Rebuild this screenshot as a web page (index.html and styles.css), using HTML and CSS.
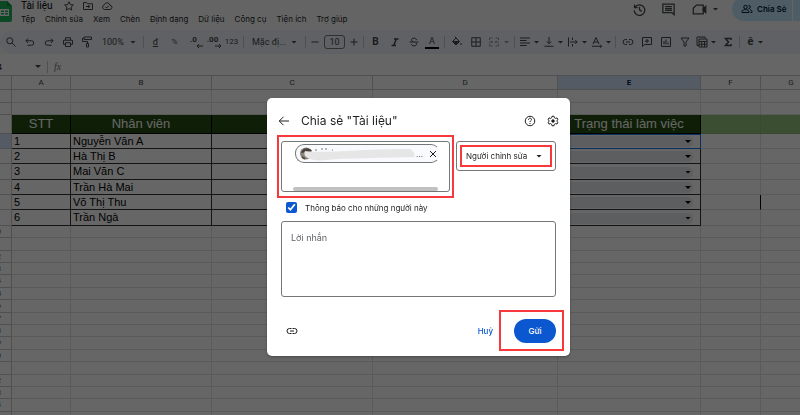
FILE: index.html
```html
<!DOCTYPE html>
<html lang="vi">
<head>
<meta charset="utf-8">
<title>Tài liệu</title>
<link rel="stylesheet" href="styles.css">
</head>
<body>
<div class="app">
  <header class="top">
    <svg class="logo" viewBox="0 0 12 24"><path d="M0 1h7l5 5v14a2 2 0 0 1-2 2H0z" fill="#22b55d"/><path d="M7 1l5 5H7z" fill="#148a45"/><path d="M0 9h9v7H0zM1 10.500v1.500h3v-1.500zM5 10.500v1.500h3v-1.500zM1 13v1.500h3V13zM5 13v1.500h3V13z" fill="#fff" fill-rule="evenodd"/></svg>
    <div class="names">
      <div class="title-line">
        <span class="doc-name">Tài liệu</span>
        <svg class="ic" viewBox="0 0 24 24"><path d="M12 3.500l2.600 5.800 6.200.600-4.700 4.200 1.400 6.200L12 17l-5.500 3.300 1.400-6.200-4.700-4.200 6.200-.600z"/></svg>
        <svg class="ic" viewBox="0 0 24 24"><path d="M3 5h6l2 2.500h10V19H3zM8 13h7M12.500 10l3 3-3 3"/></svg>
        <svg class="ic" viewBox="0 0 24 24"><path d="M7 19a5 5 0 0 1-.500-9.500A6 6 0 0 1 18 10.500a4.300 4.300 0 0 1 .500 8.500zM8.500 13.500l2.500 2.500 4.500-4.500"/></svg>
      </div>
      <nav class="menu"><a href="#">Tệp</a><a href="#">Chỉnh sửa</a><a href="#">Xem</a><a href="#">Chèn</a><a href="#">Định dạng</a><a href="#">Dữ liệu</a><a href="#">Công cụ</a><a href="#">Tiện ích</a><a href="#">Trợ giúp</a></nav>
    </div>
    <div class="actions">
      <button aria-label="Lịch sử"><svg class="ic big" viewBox="0 0 24 24"><path d="M4 4v5h5M4.500 9A8.500 8.500 0 1 1 3.500 13M12 7.500V12.500l3.500 2.500"/></svg></button>
      <button aria-label="Nhận xét"><svg class="ic big" viewBox="0 0 24 24"><path d="M3 3.500h18v17l-3.500-3.500H3zM6.500 7.500h11M6.500 10.500h11M6.500 13.500h11"/></svg></button>
      <button aria-label="Cuộc gọi"><svg class="ic big" viewBox="0 0 24 24"><path d="M7 5h11v14H2V10z"/><path d="M18 10.500l4-3.500v10l-4-3.500z" fill="#444746"/></svg><i class="caret"></i></button>
      <button class="share"><svg class="ic" viewBox="0 0 24 24"><circle cx="9" cy="8" r="3.500"/><path d="M2 19v-2c0-5 14-5 14 0v2zM15 4.500a3.500 3.500 0 0 1 0 7M18 13.500c3 .800 4 2 4 3.500v2h-3"/></svg><span>Chia Sẻ</span></button>
      <button class="share-more" aria-label="Tùy chọn chia sẻ"></button>
    </div>
  </header>

  <div class="toolbar">
    <button aria-label="Tìm"><svg class="ic" viewBox="0 0 24 24"><circle cx="9.500" cy="9.500" r="6"/><path d="M14 14l7 7"/></svg></button>
    <button aria-label="Hoàn tác"><svg class="ic" viewBox="0 0 24 24"><path d="M8 5L4 9.500 8 14M4 9.500h11a4.500 4.500 0 0 1 0 9H7"/></svg></button>
    <button aria-label="Làm lại"><svg class="ic" viewBox="0 0 24 24"><path d="M16 5l4 4.500-4 4.500M20 9.500H9a4.500 4.500 0 0 0 0 9h8"/></svg></button>
    <button aria-label="In"><svg class="ic" viewBox="0 0 24 24"><path d="M7 8V3.500h10V8M7 16.500H3V8.500h18v8h-4M7 13.500h10V21H7z"/></svg></button>
    <button aria-label="Sao chép định dạng"><svg class="ic" viewBox="0 0 24 24"><path d="M6 2h15v5H6zM6 4.500H3V11h10v4M11 15h4v7h-4z"/></svg></button>
    <button class="zoom"><span>100%</span><i class="caret"></i></button>
    <i class="sep"></i>
    <button><u>đ</u></button>
    <button class="small">%</button>
    <button class="dec">.0<svg viewBox="0 0 8 4"><path d="M8 2H2M4 0L2 2l2 2"/></svg></button>
    <button class="dec">.00<svg viewBox="0 0 8 4"><path d="M1 2h6M5 0l2 2-2 2"/></svg></button>
    <button class="small">123</button>
    <i class="sep"></i>
    <button class="font"><span>Mặc đị...</span><i class="caret"></i></button>
    <i class="sep"></i>
    <button class="step" aria-label="Giảm"><svg class="ic" viewBox="0 0 24 24"><path d="M5 12h14"/></svg></button>
    <input class="size" value="10" aria-label="Cỡ chữ">
    <button class="step" aria-label="Tăng"><svg class="ic" viewBox="0 0 24 24"><path d="M5 12h14M12 5v14"/></svg></button>
    <i class="sep"></i>
    <button class="bold">B</button>
    <button aria-label="Nghiêng"><svg class="ic heavy" viewBox="0 0 24 24"><path d="M10 6h9M5 19h9M14.500 6l-5 13"/></svg></button>
    <button aria-label="Gạch ngang"><svg class="ic" viewBox="0 0 24 24"><path d="M3 12h18M17 8c0-5-10-5-10-.500 0 2 1.500 3 3 3.500M7 16c0 5 10 5 10 .500 0-1.500-.500-2.500-1-3"/></svg></button>
    <button class="tint">A</button>
    <i class="sep"></i>
    <button aria-label="Màu nền"><svg class="ic" viewBox="0 0 24 24"><path d="M8 1l3 4M10 4l7 7-7 7-7-7z"/><path d="M4 11h12l-6 6z" fill="#444746"/><path d="M20 14v4"/></svg></button>
    <button aria-label="Đường viền"><svg class="ic" viewBox="0 0 24 24"><path d="M3.500 3.500h17v17h-17zM12 3.500v17M3.500 12h17"/></svg></button>
    <button class="merge" aria-label="Hợp nhất"><svg class="ic" viewBox="0 0 24 24"><path d="M9 4H3v4M15 4h6v4M9 20H3v-4M15 20h6v-4M2 12h7M7 9.500L9.500 12 7 14.500M22 12h-7M17 9.500L14.500 12l2.500 2.500"/></svg><i class="caret"></i></button>
    <i class="sep"></i>
    <button class="drop" aria-label="Căn ngang"><svg class="ic" viewBox="0 0 24 24"><path d="M2 4h20M2 9h13M2 14h20M2 19h13"/></svg><i class="caret"></i></button>
    <button class="drop" aria-label="Căn dọc"><svg class="ic" viewBox="0 0 24 24"><path d="M3 20.500h18M12 2v13M7.500 11l4.500 4.500 4.500-4.500"/></svg><i class="caret"></i></button>
    <button class="drop" aria-label="Xuống dòng"><svg class="ic" viewBox="0 0 24 24"><path d="M3 3v18M11 3v5M11 16v5M6 12h14M16.500 8l4 4-4 4"/></svg><i class="caret"></i></button>
    <button class="drop" aria-label="Xoay chữ"><svg class="ic" viewBox="0 0 24 24"><path d="M4 16l6-13 6 13M6 12h8M2 20.500h19M18.500 17.500l3 3-3 3"/></svg><i class="caret"></i></button>
    <i class="sep"></i>
    <button aria-label="Liên kết"><svg class="ic" viewBox="0 0 24 24"><path d="M10 7H7a5 5 0 0 0 0 10h3M14 7h3a5 5 0 0 1 0 10h-3M8 12h8"/></svg></button>
    <button aria-label="Thêm nhận xét"><svg class="ic" viewBox="0 0 24 24"><path d="M3 3h18v14H7l-4 4zM12 6v8M8 10h8"/></svg></button>
    <button aria-label="Biểu đồ"><svg class="ic" viewBox="0 0 24 24"><path d="M3 3h18v18H3zM8 10v7M12 7v10M16 13v4"/></svg></button>
    <button aria-label="Bộ lọc"><svg class="ic" viewBox="0 0 24 24"><path d="M4 4h16l-6 8v8h-4v-8z"/></svg></button>
    <button class="drop" aria-label="Bảng"><svg class="ic" viewBox="0 0 24 24"><path d="M6 19H2V2h16v3M6 6h16v16H6zM6 11h16M6 16.500h16M11.500 11v11M17 11v11"/></svg><i class="caret"></i></button>
    <button aria-label="Hàm"><svg class="ic heavy" viewBox="0 0 24 24"><path d="M18 8V5H7l6 7-6 7h11v-3"/></svg></button>
    <i class="sep"></i>
    <button class="merge input"><b>ê</b><i class="caret"></i></button>
  </div>

  <div class="formula">
    <span class="cell-name">4</span><i class="caret"></i><i class="sep"></i><em>fx</em>
  </div>

  <div class="sheet">
    <table>
      <colgroup><col class="c-row"><col class="c-a"><col class="c-b"><col class="c-c"><col class="c-d"><col class="c-e"><col class="c-f"><col class="c-g"></colgroup>
      <thead>
        <tr><th></th><th>A</th><th>B</th><th>C</th><th>D</th><th class="on">E</th><th>F</th><th>G</th></tr>
      </thead>
      <tbody class="lead">
        <tr><th></th><td></td><td></td><td></td><td></td><td></td><td></td><td></td></tr>
        <tr><th></th><td></td><td></td><td></td><td></td><td></td><td></td><td></td></tr>
        <tr class="heads"><th></th><td>STT</td><td>Nhân viên</td><td></td><td></td><td>Trạng thái làm việc</td><td></td><td></td></tr>
      </tbody>
      <tbody class="data">
        <tr><th class="on"></th><td>1</td><td>Nguyễn Văn A</td><td></td><td></td><td class="active"><label class="pick"><select aria-label="Trạng thái 1"><option></option></select><i class="caret"></i></label></td><td></td><td></td></tr>
        <tr><th></th><td>2</td><td>Hà Thị B</td><td></td><td></td><td><label class="pick"><select aria-label="Trạng thái 2"><option></option></select><i class="caret"></i></label></td><td></td><td></td></tr>
        <tr><th></th><td>3</td><td>Mai Văn C</td><td></td><td></td><td><label class="pick"><select aria-label="Trạng thái 3"><option></option></select><i class="caret"></i></label></td><td></td><td></td></tr>
        <tr><th></th><td>4</td><td>Trần Hà Mai</td><td></td><td></td><td><label class="pick"><select aria-label="Trạng thái 4"><option></option></select><i class="caret"></i></label></td><td></td><td></td></tr>
        <tr><th></th><td>5</td><td>Võ Thị Thu</td><td></td><td></td><td><label class="pick"><select aria-label="Trạng thái 5"><option></option></select><i class="caret"></i></label></td><td class="edge"></td><td></td></tr>
        <tr><th></th><td>6</td><td>Trần Ngà</td><td></td><td></td><td><label class="pick"><select aria-label="Trạng thái 6"><option></option></select><i class="caret"></i></label></td><td></td><td></td></tr>
      </tbody>
      <tbody class="blank">
        <tr><th>10</th><td></td><td></td><td></td><td></td><td></td><td></td><td></td></tr>
        <tr><th>11</th><td></td><td></td><td></td><td></td><td></td><td></td><td></td></tr>
        <tr><th>12</th><td></td><td></td><td></td><td></td><td></td><td></td><td></td></tr>
        <tr><th>13</th><td></td><td></td><td></td><td></td><td></td><td></td><td></td></tr>
        <tr><th>14</th><td></td><td></td><td></td><td></td><td></td><td></td><td></td></tr>
        <tr><th>15</th><td></td><td></td><td></td><td></td><td></td><td></td><td></td></tr>
        <tr><th>16</th><td></td><td></td><td></td><td></td><td></td><td></td><td></td></tr>
        <tr><th>17</th><td></td><td></td><td></td><td></td><td></td><td></td><td></td></tr>
        <tr><th>18</th><td></td><td></td><td></td><td></td><td></td><td></td><td></td></tr>
        <tr><th>19</th><td></td><td></td><td></td><td></td><td></td><td></td><td></td></tr>
        <tr><th>20</th><td></td><td></td><td></td><td></td><td></td><td></td><td></td></tr>
        <tr><th>21</th><td></td><td></td><td></td><td></td><td></td><td></td><td></td></tr>
        <tr><th>22</th><td></td><td></td><td></td><td></td><td></td><td></td><td></td></tr>
        <tr><th>23</th><td></td><td></td><td></td><td></td><td></td><td></td><td></td></tr>
        <tr><th>24</th><td></td><td></td><td></td><td></td><td></td><td></td><td></td></tr>
        <tr><th></th><td></td><td></td><td></td><td></td><td></td><td></td><td></td></tr>
      </tbody>
    </table>
  </div>
</div>

<div class="scrim">
  <form class="dialog" role="dialog" aria-labelledby="share-title">
    <div class="dialog-head">
      <button type="button" aria-label="Quay lại"><svg class="ic" viewBox="0 0 24 24"><path d="M22 12H3M11 3.500L2.500 12l8.500 8.500"/></svg></button>
      <h1 id="share-title">Chia sẻ "Tài liệu"</h1>
      <button type="button" aria-label="Trợ giúp"><svg class="ic" viewBox="0 0 24 24"><circle cx="12" cy="12" r="9.500"/><path d="M9 9.500c0-4 6-4 6-.500 0 2.300-3 2.300-3 5M12 16v2.200"/></svg></button>
      <button type="button" aria-label="Cài đặt"><svg class="ic" viewBox="0 0 24 24"><path d="M10 2.500h4l.700 3 2.300 1.300 3-1 2 3.500-2.300 2v1.400l2.300 2-2 3.500-3-1-2.300 1.300-.700 3h-4l-.700-3L7 17.200l-3 1-2-3.500 2.300-2v-1.400L2 9.300l2-3.500 3 1 2.300-1.300z"/><circle cx="12" cy="12" r="2.500" fill="#1f1f1f"/></svg></button>
    </div>
    <div class="people-row">
      <div class="people mark">
        <div class="chip">
          <svg class="smudge" viewBox="0 0 120 17" preserveAspectRatio="xMinYMid meet"><circle cx="10" cy="8.500" r="6" fill="#8b8580"/><path d="M5 8c1-6 9-6 11-2z" fill="#4b4039"/><path d="M6 12l3 2" stroke="#5a4632" stroke-width="2"/><path d="M19 5h2M25 4h2M29 4h2M36 5h1" stroke="#777"/><path d="M9 6C30 9 70 3 114 4q6 3 4 8C90 13 50 13 30 15c-8 1-16 0-20-3-2-2-2-4-1-6z" fill="#e6e6e7"/></svg>
          <span>...</span>
          <button type="button" aria-label="Xóa"><svg class="ic" viewBox="0 0 24 24"><path d="M6 6l12 12M18 6L6 18"/></svg></button>
        </div>
        <i class="scroll"></i>
      </div>
      <label class="role mark"><select aria-label="Quyền"><option>Người chỉnh sửa</option></select><i class="caret"></i></label>
    </div>
    <label class="notify"><input type="checkbox" checked><span>Thông báo cho những người này</span></label>
    <textarea placeholder="Lời nhắn" aria-label="Lời nhắn"></textarea>
    <div class="dialog-foot">
      <button type="button" class="link" aria-label="Sao chép liên kết"><svg class="ic" viewBox="0 0 24 24"><path d="M11 7H7a5 5 0 0 0 0 10h4M13 7h4a5 5 0 0 1 0 10h-4M8 12h8"/></svg></button>
      <button type="button" class="cancel">Huỷ</button>
      <span class="send-wrap mark"><button type="button" class="send">Gửi</button></span>
    </div>
  </form>
</div>
</body>
</html>
```

FILE: styles.css
```css
* { box-sizing: border-box; }
html, body { height: 100%; margin: 0; overflow: hidden; }
body { font: 8px/12px Inter, Roboto, sans-serif; color: #1f1f1f; background: #f9fbfd; }
button, input, select, textarea { font: inherit; color: inherit; margin: 0; padding: 0; border: 0; background: none; }
button { display: flex; align-items: center; justify-content: center; }
a { color: inherit; text-decoration: none; }

.ic { width: 12px; height: 12px; flex: none; fill: none; stroke: #444746; stroke-width: 2; }
.big { width: 15px; height: 15px; }
.heavy { stroke-width: 3; }
.caret { flex: none; width: 6px; height: 3px; background: #444746; clip-path: polygon(0 0, 100% 0, 50% 100%); }

.app { height: 100%; overflow: hidden; }
.top { display: flex; height: 30px; }
.logo { width: 12px; height: 24px; }
.names { flex: 1; padding-left: 9px; }
.title-line { display: flex; align-items: center; gap: 7px; height: 11px; }
.doc-name { font: 10px/12px Roboto, sans-serif; margin-right: 4px; color: #000; }
.menu { display: flex; gap: 10px; margin-top: 2px; }
.actions { display: flex; align-items: flex-start; }
.actions button { height: 18px; width: 29px; gap: 6px; }
.actions button:nth-child(3) { width: 44px; margin-right: 5px; }
.actions .share { width: 60px; height: 24px; margin-top: -3px; gap: 4px; padding-left: 9px; background: #c2e7ff; border-radius: 12px 0 0 12px; color: #001d35; font-weight: 600; justify-content: flex-start; white-space: nowrap; }
.actions .share-more { width: 7px; height: 24px; margin: -3px 0 0 1px; background: #c2e7ff; }
.share .ic { stroke: #001d35; }

.toolbar { display: flex; align-items: center; height: 24px; padding-left: 1px; background: #edf2fa; border-radius: 12px 0 0 12px; color: #444746; font: 9px/12px Roboto, sans-serif; }
.toolbar button { flex: none; width: 19px; height: 20px; }
.toolbar .zoom { width: 45px; justify-content: space-between; padding: 0 5px 0 6px; }
.toolbar .font { width: 57px; justify-content: space-between; padding: 0 6px; }
.toolbar .step { width: 14px; }
.toolbar .merge { width: 27px; gap: 4px; }
.toolbar .drop { width: 24px; gap: 3px; }
.merge:not(.input) { opacity: .5; }
.toolbar .small { font-size: 8px; }
.toolbar .bold { font-weight: 700; font-size: 10px; }
.toolbar .size { flex: none; width: 21px; height: 14px; margin: 0 2px; border: 1px solid #747775; border-radius: 3px; text-align: center; }
.toolbar .dec { flex-direction: column; font-size: 8px; font-weight: 700; line-height: 8px; gap: 0; }
.dec svg { width: 8px; height: 4px; align-self: flex-end; fill: none; stroke: #444746; }
.toolbar .tint { height: 13px; border-bottom: 2px solid #000; width: 14px; margin: 0 3px 0 2px; }
.input b { font-size: 11px; }
.sep { flex: none; width: 1px; height: 12px; margin: 0 2px; background: #c7c7c7; }

.formula { display: flex; align-items: center; height: 21px; padding-top: 4px; background: #fff; }
.cell-name { width: 35px; text-indent: -3px; }
.formula .sep { margin: 0 6px; }
.formula em { color: #747775; font-family: "Liberation Serif", serif; font-size: 10px; }

.sheet { overflow: hidden; background: #fff; }
table { table-layout: fixed; width: 840px; margin-left: -18px; border-collapse: separate; border-spacing: 0; }
.c-row { width: 30px; }
.c-a { width: 59px; }
.c-b { width: 141px; }
.c-c { width: 161px; }
.c-d { width: 185px; }
.c-e { width: 143px; }
.c-f { width: 60px; }
.c-g { width: 61px; }
th, td { height: 12px; padding: 0; border: solid #e1e1e1; border-width: 0 1px 1px 0; line-height: 10px; overflow: hidden; white-space: nowrap; }
th { font: 8px/10px Roboto, sans-serif; color: #444746; text-align: center; border-color: #c7c7c7; }
thead th { height: 15px; border-top: 1px solid #c7c7c7; }
th.on { background: #d3e3fd; }
thead .on { font-weight: 700; color: #041e49; }
.lead tr:first-child > * { height: 13px; }
.heads > * { height: 19px; }
.heads td { background: #274e13; color: #fff; font: 13px/18px "Liberation Sans", sans-serif; text-align: center; border-color: #000; }
.heads td:nth-last-child(-n+2) { background: #93c47d; border-color: #8bb977; }
.data > tr > * { height: 15px; }
.data > tr:nth-child(3n) > * { height: 16px; }
.data td { padding-left: 2px; font: 11px/13px "Liberation Sans", sans-serif; color: #000; border-color: #333; }
.data td:nth-last-child(-n+2) { border-color: #e1e1e1; }
.data td.edge { border-right-color: #000; }
.data td.active { border-color: #1a73e8; box-shadow: inset 0 1px #1a73e8; }
.blank tr:nth-child(5n+2) > *, .blank tr:nth-child(5n) > * { height: 13px; }
.pick { display: flex; align-items: center; justify-content: flex-end; height: 11px; margin: 1px 7px 0 3px; padding-right: 2px; border-radius: 6px; background: #e8eaed; }
.pick select { flex: 1; height: 11px; appearance: none; }
.pick .caret { background: #000; }

.scrim { position: fixed; inset: 0; display: flex; justify-content: center; align-items: flex-start; padding: 98px 0 0 37px; background: rgba(0, 0, 0, .6); }
.dialog { width: 303px; padding: 0 14px 13px; background: #fff; border-radius: 5px; box-shadow: 0 1px 3px rgba(0, 0, 0, .3); }
.dialog .ic { stroke: #1f1f1f; }
.dialog-head { display: flex; align-items: center; gap: 11px; height: 43px; padding-top: 3px; margin: 0 -3px; }
h1 { flex: 1; margin: 0; font-size: 12px; line-height: 18px; font-weight: 400; }
.people-row { display: flex; align-items: flex-start; gap: 6px; }
.mark { position: relative; }
.mark::after { content: ""; position: absolute; border: 2px solid #f8393b; pointer-events: none; }
.people { flex: 1; height: 51px; padding: 2px 9px 0 13px; border: 1px solid #747775; border-radius: 3px; }
.people::after { inset: -7px -5px; }
.chip { display: flex; align-items: center; height: 19px; border: 1px solid #747775; border-right-color: transparent; border-radius: 9px; background: #f8fafd; }
.chip span { margin-right: 4px; }
.smudge { flex: 1; min-width: 0; height: 17px; }
.scroll { display: block; height: 4px; margin: 24px 2px 0 -2px; border-radius: 2px; background: #c1c1c1; }
.role { display: flex; align-items: center; width: 100px; height: 30px; padding: 0 13px 0 9px; border: 1px solid #747775; border-radius: 3px; }
.role::after { inset: 3px; }
.role select { flex: 1; min-width: 0; appearance: none; }
.role .caret { background: #1f1f1f; }
.notify { display: flex; align-items: center; gap: 8px; height: 29px; padding: 2px 0 0 5px; }
.notify input { width: 11px; height: 11px; accent-color: #0b57d0; }
textarea { display: block; width: 100%; height: 76px; padding: 10px 9px; border: 1px solid #747775; border-radius: 3px; font-size: 9px; resize: none; }
textarea::placeholder { color: #5f6368; opacity: 1; }
.dialog-foot { display: flex; align-items: center; margin-top: 22px; }
.link { margin: 0 auto 0 5px; }
.cancel { color: #0b57d0; font-weight: 500; margin-right: 21px; }
.send { width: 42px; height: 24px; border-radius: 12px; background: #0b57d0; color: #fff; font-weight: 500; }
.send-wrap::after { inset: -9px -8px -8px -15px; }
```
